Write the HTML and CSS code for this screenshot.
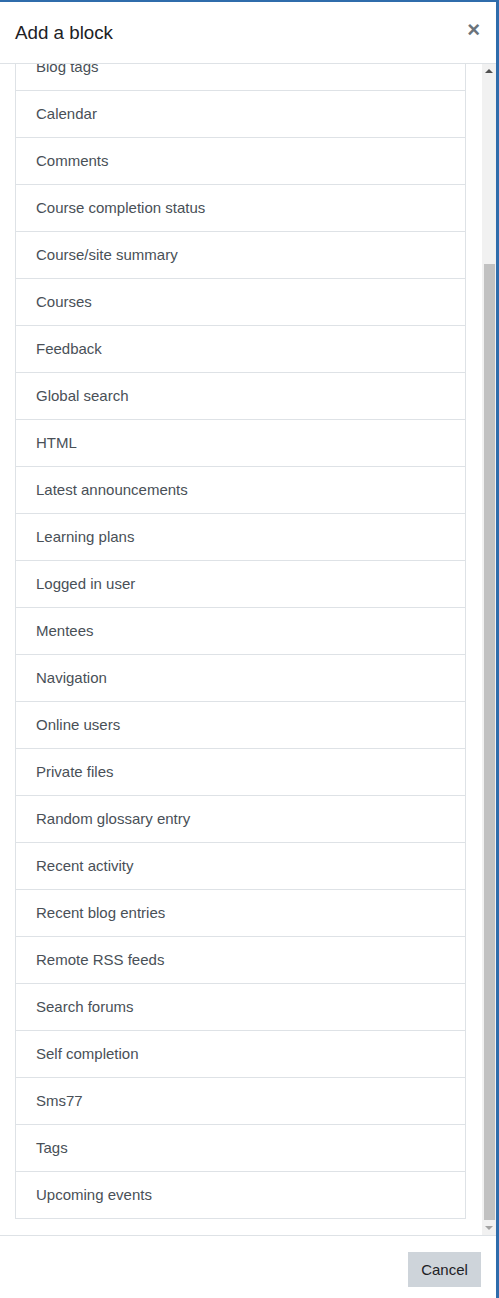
FILE: index.html
```html
<!DOCTYPE html>
<html>
<head>
<meta charset="utf-8">
<link rel="stylesheet" href="styles.css">
</head>
<body>
<div class="modal">
  <div class="modal-header">
    <h5 class="modal-title">Add a block</h5>
    <span class="close">×</span>
  </div>
  <div class="modal-body">
    <div class="viewport">
      <div class="list">
        <a class="item">Blog tags</a>
        <a class="item">Calendar</a>
        <a class="item">Comments</a>
        <a class="item">Course completion status</a>
        <a class="item">Course/site summary</a>
        <a class="item">Courses</a>
        <a class="item">Feedback</a>
        <a class="item">Global search</a>
        <a class="item">HTML</a>
        <a class="item">Latest announcements</a>
        <a class="item">Learning plans</a>
        <a class="item">Logged in user</a>
        <a class="item">Mentees</a>
        <a class="item">Navigation</a>
        <a class="item">Online users</a>
        <a class="item">Private files</a>
        <a class="item">Random glossary entry</a>
        <a class="item">Recent activity</a>
        <a class="item">Recent blog entries</a>
        <a class="item">Remote RSS feeds</a>
        <a class="item">Search forums</a>
        <a class="item">Self completion</a>
        <a class="item">Sms77</a>
        <a class="item">Tags</a>
        <a class="item">Upcoming events</a>
      </div>
    </div>
    <div class="scrollbar">
      <div class="arrow up"></div>
      <div class="track">
        <div class="thumb"></div>
      </div>
      <div class="arrow down"></div>
    </div>
  </div>
  <div class="modal-footer">
    <button class="btn">Cancel</button>
  </div>
</div>
</body>
</html>
```

FILE: styles.css
```css
html, body {
  margin: 0;
  padding: 0;
  height: 100%;
}
body {
  background: #2f6cab;
  font-family: "Liberation Sans", Arial, sans-serif;
  overflow: hidden;
}
.modal {
  margin: 2px 3px 0 0;
  height: 1296px;
  background: #fff;
  display: flex;
  flex-direction: column;
}
.modal-header {
  height: 61px;
  border-bottom: 1px solid #dee2e6;
  display: flex;
  align-items: center;
  justify-content: space-between;
  padding: 0 16px 0 15px;
  flex: none;
}
.modal-title {
  margin: 0;
  font-size: 18.75px;
  font-weight: 400;
  color: #1d2125;
  padding-top: 1px;
}
.close {
  font-size: 22px;
  font-weight: 700;
  color: #6a737b;
  line-height: 1;
  margin-top: -6px;
}
.modal-body {
  height: 1171px;
  flex: none;
  display: flex;
}
.viewport {
  flex: 1;
  overflow: hidden;
  display: flex;
  flex-direction: column;
  justify-content: flex-end;
  padding: 0 16px 16px 15px;
}
.list {
  display: flex;
  flex-direction: column;
  border: 1px solid #dee2e6;
  border-top: none;
  flex: none;
}
.item {
  display: block;
  border-top: 1px solid #dee2e6;
  padding: 12px 20px;
  line-height: 22px;
  font-size: 15px;
  color: #495057;
}
.scrollbar {
  width: 14px;
  background: #f1f1f1;
  display: flex;
  flex-direction: column;
  flex: none;
}
.arrow {
  height: 14px;
  display: flex;
  align-items: center;
  justify-content: center;
  flex: none;
}
.arrow::before {
  content: "";
  border-left: 4px solid transparent;
  border-right: 4px solid transparent;
}
.arrow.up::before {
  border-bottom: 4px solid #505050;
}
.arrow.down::before {
  border-top: 4px solid #a3a3a3;
}
.track {
  flex: 1;
  display: flex;
  flex-direction: column;
  justify-content: flex-end;
  padding: 0 1px 1px 2px;
}
.thumb {
  height: 956px;
  background: #c1c1c1;
}
.modal-footer {
  border-top: 1px solid #dee2e6;
  display: flex;
  justify-content: flex-end;
  padding: 16px 15px 0 15px;
}
.btn {
  width: 73px;
  height: 35px;
  background: #ced4da;
  border: none;
  border-radius: 0;
  font-family: "Liberation Sans", Arial, sans-serif;
  font-size: 15px;
  color: #1d2125;
  padding: 0;
}
```
